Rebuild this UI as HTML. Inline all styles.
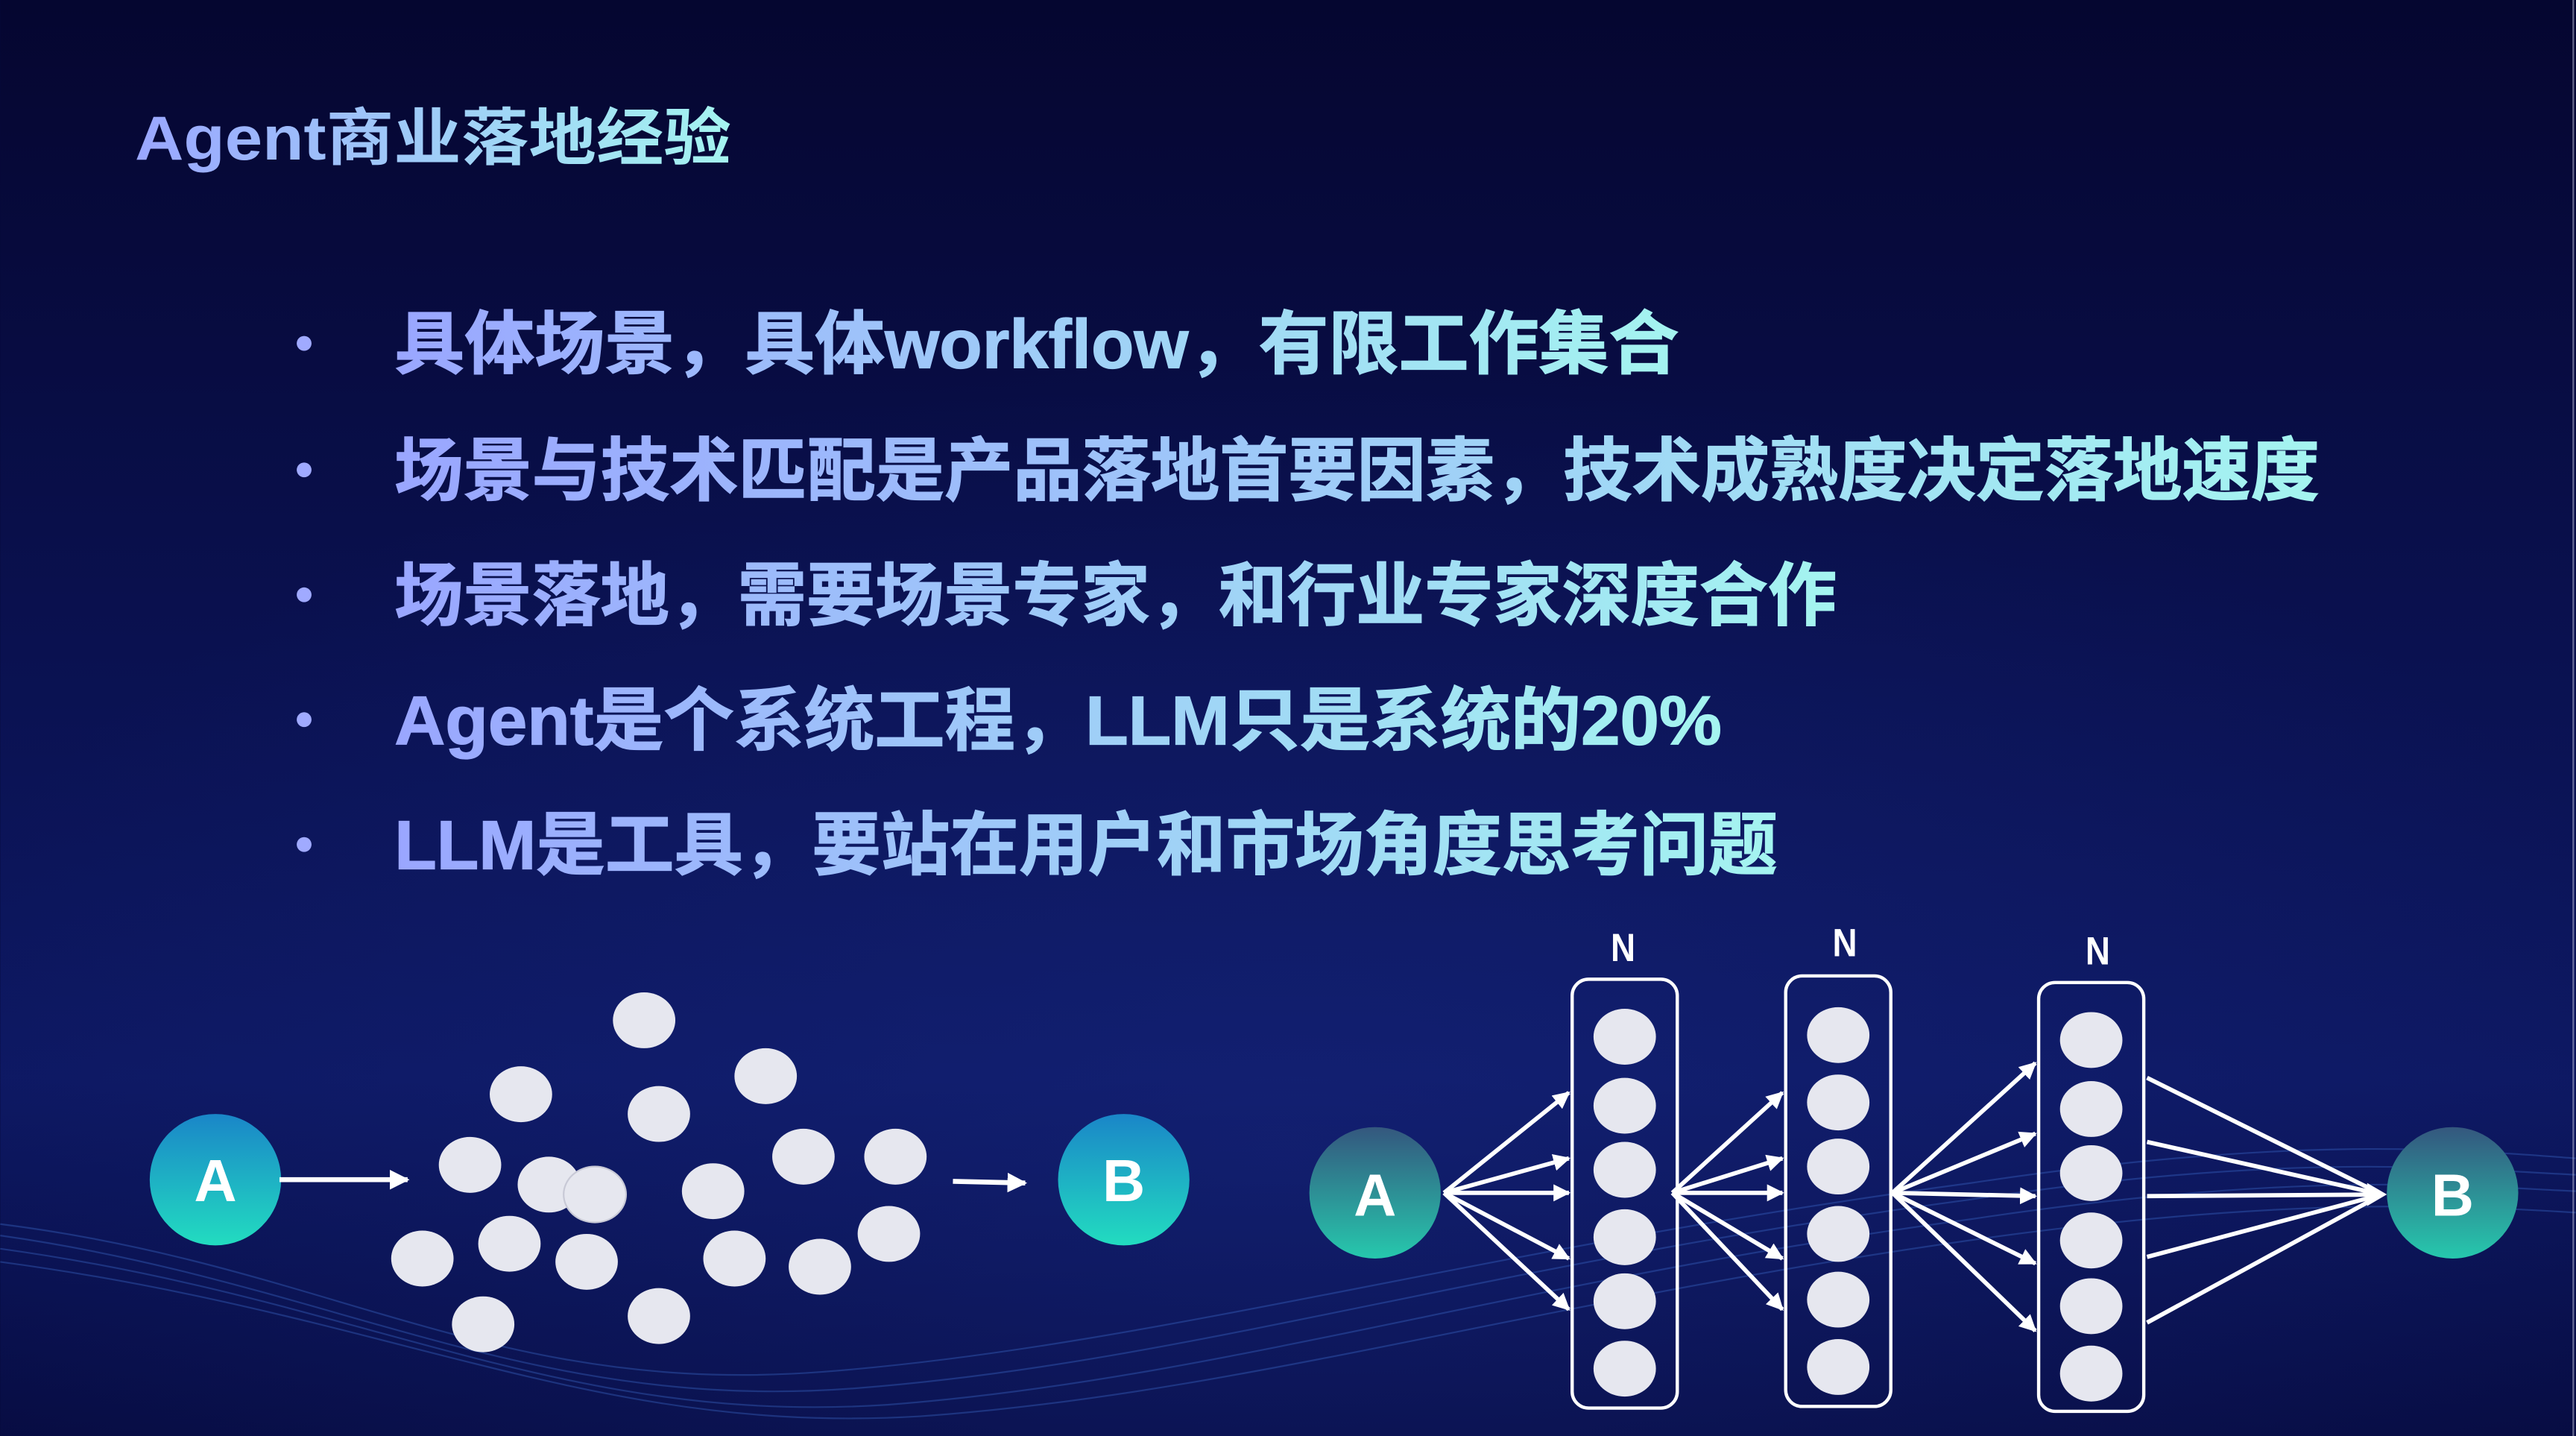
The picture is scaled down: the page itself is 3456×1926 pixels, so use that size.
<!DOCTYPE html>
<html><head><meta charset="utf-8">
<style>
html,body{margin:0;padding:0;background:#050838;}
svg{display:block;}
text{font-family:"Liberation Sans","Noto Sans CJK SC",sans-serif;font-weight:bold;}
</style></head>
<body>
<svg width="3456" height="1926" viewBox="0 0 1568 874" xmlns="http://www.w3.org/2000/svg">
<defs>
<linearGradient id="bg" x1="0" y1="0" x2="0" y2="1">
<stop offset="0" stop-color="#050630"/>
<stop offset="0.45" stop-color="#0a1150"/>
<stop offset="0.75" stop-color="#0d1862"/>
<stop offset="1" stop-color="#070c42"/>
</linearGradient>
<radialGradient id="glow" cx="0.5" cy="0.8" r="0.55">
<stop offset="0" stop-color="#1a2c8a" stop-opacity="0.4"/>
<stop offset="1" stop-color="#1a2c8a" stop-opacity="0"/>
</radialGradient>
<linearGradient id="tg" x1="0" y1="0" x2="1" y2="0">
<stop offset="0" stop-color="#9aa6ff"/>
<stop offset="1" stop-color="#a4f4f0"/>
</linearGradient>
<linearGradient id="cg" x1="0" y1="0" x2="0" y2="1">
<stop offset="0" stop-color="#1a86c8"/>
<stop offset="1" stop-color="#22dcc0"/>
</linearGradient>
<linearGradient id="cg2" x1="0" y1="0" x2="0" y2="1">
<stop offset="0" stop-color="#34577e"/>
<stop offset="1" stop-color="#26c8ad"/>
</linearGradient>
<marker id="ar" viewBox="0 0 10 10" refX="9" refY="5" markerWidth="4" markerHeight="4" orient="auto">
<path d="M0,0 L10,5 L0,10 z" fill="#fff"/>
</marker>
</defs>
<rect width="1568" height="874" fill="url(#bg)"/>
<rect width="1568" height="874" fill="url(#glow)"/>
<g fill="none" stroke="#3e6fd0" stroke-opacity="0.35" stroke-width="1">
<path d="M0,745 C200,770 300,850 500,835 C700,820 900,760 1200,720 C1400,690 1500,700 1568,705"/>
<path d="M0,752 C200,780 320,860 520,845 C720,830 900,770 1200,730 C1400,700 1500,712 1568,715"/>
<path d="M0,760 C220,790 340,868 540,855 C740,840 920,780 1200,742 C1400,712 1500,722 1568,725"/>
<path d="M0,768 C240,800 360,874 560,862 C760,848 940,790 1220,752 C1400,728 1500,734 1568,738"/>
</g>
<line x1="1566.5" y1="0" x2="1566.5" y2="874" stroke="#c8c8e0" stroke-width="1" stroke-opacity="0.5"/>

<text x="82" y="97" font-size="38" fill="url(#tg)" textLength="363" lengthAdjust="spacingAndGlyphs">Agent商业落地经验</text>

<g fill="#a0aaff">
<circle cx="185" cy="209" r="4.5"/><circle cx="185" cy="286" r="4.5"/><circle cx="185" cy="362" r="4.5"/><circle cx="185" cy="438" r="4.5"/><circle cx="185" cy="514" r="4.5"/>
</g>
<g font-size="42" fill="url(#tg)" stroke="url(#tg)" stroke-width="0.6">
<text x="240" y="224" textLength="782" lengthAdjust="spacingAndGlyphs">具体场景，具体workflow，有限工作集合</text>
<text x="240" y="301" textLength="1172" lengthAdjust="spacingAndGlyphs">场景与技术匹配是产品落地首要因素，技术成熟度决定落地速度</text>
<text x="240" y="377" textLength="878" lengthAdjust="spacingAndGlyphs">场景落地，需要场景专家，和行业专家深度合作</text>
<text x="240" y="453" textLength="808" lengthAdjust="spacingAndGlyphs">Agent是个系统工程，LLM只是系统的20%</text>
<text x="240" y="529" textLength="842" lengthAdjust="spacingAndGlyphs">LLM是工具，要站在用户和市场角度思考问题</text>
</g>

<!-- left diagram -->
<circle cx="131" cy="718" r="40" fill="url(#cg)"/>
<text x="131" y="731" font-size="36" fill="#fff" text-anchor="middle">A</text>
<line x1="170" y1="718" x2="248" y2="718" stroke="#fff" stroke-width="3" marker-end="url(#ar)"/>
<line x1="580" y1="719" x2="624" y2="720" stroke="#fff" stroke-width="3" marker-end="url(#ar)"/>
<circle cx="684" cy="718" r="40" fill="url(#cg)"/>
<text x="684" y="731" font-size="36" fill="#fff" text-anchor="middle">B</text>
<g fill="#e6e7ef">
<ellipse cx="392" cy="621" rx="19" ry="17"/><ellipse cx="317" cy="666" rx="19" ry="17"/><ellipse cx="466" cy="655" rx="19" ry="17"/><ellipse cx="401" cy="678" rx="19" ry="17"/><ellipse cx="286" cy="709" rx="19" ry="17"/><ellipse cx="489" cy="704" rx="19" ry="17"/><ellipse cx="545" cy="704" rx="19" ry="17"/><ellipse cx="334" cy="721" rx="19" ry="17"/><ellipse cx="434" cy="725" rx="19" ry="17"/><ellipse cx="257" cy="766" rx="19" ry="17"/><ellipse cx="310" cy="757" rx="19" ry="17"/><ellipse cx="357" cy="768" rx="19" ry="17"/><ellipse cx="447" cy="766" rx="19" ry="17"/><ellipse cx="499" cy="771" rx="19" ry="17"/><ellipse cx="541" cy="751" rx="19" ry="17"/><ellipse cx="294" cy="806" rx="19" ry="17"/><ellipse cx="401" cy="801" rx="19" ry="17"/>
</g>
<ellipse cx="362" cy="727" rx="19" ry="17" fill="#e6e7ef" stroke="#c8c9d6" stroke-width="1"/>

<!-- right diagram -->
<circle cx="837" cy="726" r="40" fill="url(#cg2)"/>
<text x="837" y="740" font-size="36" fill="#fff" text-anchor="middle">A</text>
<circle cx="1493" cy="726" r="40" fill="url(#cg2)"/>
<text x="1493" y="740" font-size="36" fill="#fff" text-anchor="middle">B</text>
<g font-size="24" fill="#fff" text-anchor="middle">
<text x="988" y="585" textLength="15" lengthAdjust="spacingAndGlyphs">N</text><text x="1123" y="582" textLength="15" lengthAdjust="spacingAndGlyphs">N</text><text x="1277" y="587" textLength="15" lengthAdjust="spacingAndGlyphs">N</text>
</g>
<g fill="none" stroke="#fff" stroke-width="2">
<rect x="957" y="596" width="64" height="261" rx="10"/>
<rect x="1087" y="594" width="64" height="262" rx="10"/>
<rect x="1241" y="598" width="64" height="261" rx="10"/>
</g>
<g fill="#e6e7ef">
<ellipse cx="989" cy="631" rx="19" ry="17"/><ellipse cx="989" cy="673" rx="19" ry="17"/><ellipse cx="989" cy="712" rx="19" ry="17"/><ellipse cx="989" cy="753" rx="19" ry="17"/><ellipse cx="989" cy="792" rx="19" ry="17"/><ellipse cx="989" cy="833" rx="19" ry="17"/>
<ellipse cx="1119" cy="630" rx="19" ry="17"/><ellipse cx="1119" cy="671" rx="19" ry="17"/><ellipse cx="1119" cy="710" rx="19" ry="17"/><ellipse cx="1119" cy="751" rx="19" ry="17"/><ellipse cx="1119" cy="791" rx="19" ry="17"/><ellipse cx="1119" cy="832" rx="19" ry="17"/>
<ellipse cx="1273" cy="633" rx="19" ry="17"/><ellipse cx="1273" cy="675" rx="19" ry="17"/><ellipse cx="1273" cy="714" rx="19" ry="17"/><ellipse cx="1273" cy="755" rx="19" ry="17"/><ellipse cx="1273" cy="795" rx="19" ry="17"/><ellipse cx="1273" cy="836" rx="19" ry="17"/>
</g>
<g stroke="#fff" stroke-width="2.6" marker-end="url(#ar)">
<line x1="879" y1="726" x2="955" y2="665"/><line x1="879" y1="726" x2="955" y2="705"/><line x1="879" y1="726" x2="955" y2="726"/><line x1="879" y1="726" x2="955" y2="766"/><line x1="879" y1="726" x2="955" y2="797"/>
<line x1="1018" y1="726" x2="1085" y2="665"/><line x1="1018" y1="726" x2="1085" y2="705"/><line x1="1018" y1="726" x2="1085" y2="726"/><line x1="1018" y1="726" x2="1085" y2="766"/><line x1="1018" y1="726" x2="1085" y2="797"/>
<line x1="1152" y1="726" x2="1239" y2="647"/><line x1="1152" y1="726" x2="1239" y2="690"/><line x1="1152" y1="726" x2="1239" y2="728"/><line x1="1152" y1="726" x2="1239" y2="769"/><line x1="1152" y1="726" x2="1239" y2="810"/>
</g>
<g stroke="#fff" stroke-width="2.6">
<line x1="1307" y1="656" x2="1450" y2="727"/><line x1="1307" y1="695" x2="1450" y2="727"/><line x1="1307" y1="728" x2="1450" y2="727"/><line x1="1307" y1="765" x2="1450" y2="727"/><line x1="1307" y1="805" x2="1450" y2="727"/>
</g>
<path d="M1441,720 L1453,727 L1441,734 z" fill="#fff"/>
</svg>
</body></html>
